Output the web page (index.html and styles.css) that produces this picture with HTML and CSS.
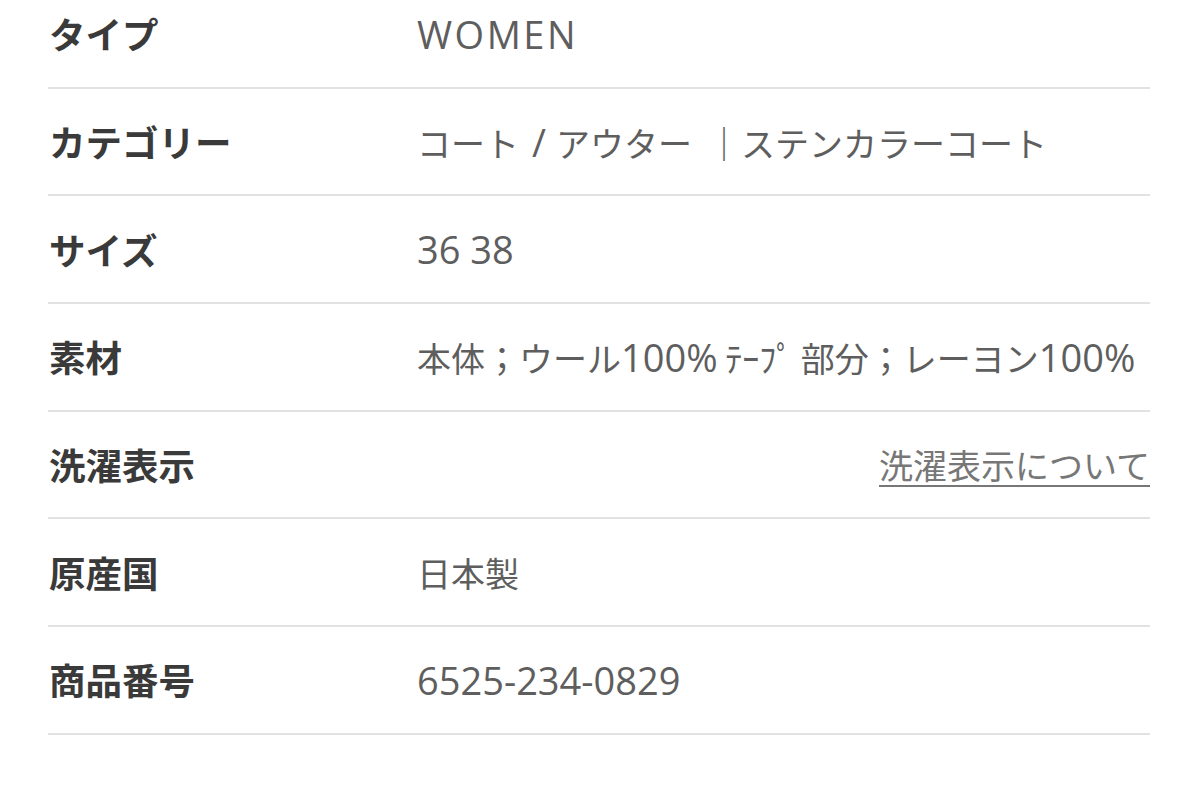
FILE: index.html
```html
<!DOCTYPE html>
<html lang="ja">
<head>
<meta charset="utf-8">
<title>商品詳細</title>
<link rel="stylesheet" href="styles.css">
</head>
<body>
<dl class="spec">
  <div class="row"><dt class="label">タイプ</dt><dd class="value"><span class="lat wide">WOMEN</span></dd></div>
  <div class="row"><dt class="label">カテゴリー</dt><dd class="value">コート<span class="lat slash">/</span>アウター<span class="bar">｜</span>ステンカラーコート</dd></div>
  <div class="row"><dt class="label">サイズ</dt><dd class="value"><span class="lat">36 38</span></dd></div>
  <div class="row"><dt class="label">素材</dt><dd class="value">本体；ウール<span class="lat">100%</span> ﾃｰﾌﾟ 部分；レーヨン<span class="lat">100%</span></dd></div>
  <div class="row"><dt class="label">洗濯表示</dt><dd class="value value-right"><a class="link" href="#">洗濯表示について</a></dd></div>
  <div class="row"><dt class="label">原産国</dt><dd class="value">日本製</dd></div>
  <div class="row"><dt class="label">商品番号</dt><dd class="value"><span class="lat">6525-234-0829</span></dd></div>
</dl>
</body>
</html>
```
FILE: styles.css
```css
html, body {
  margin: 0;
  padding: 0;
  background: #ffffff;
}
body {
  font-family: "Noto Sans CJK JP", "Open Sans", sans-serif;
  color: #333333;
  overflow: hidden;
}
.spec {
  margin: -19px 0 0 48px;
  width: 1102px;
  padding: 0;
}
.row {
  display: grid;
  grid-template-columns: 369px 1fr;
  align-items: center;
  height: 107.7px;
  box-sizing: border-box;
  border-bottom: 2px solid #e2e2e2;
}
.label {
  margin: 0;
  font-size: 36.5px;
  font-weight: 700;
  color: #3a3a3a;
  padding-left: 1px;
}
.value {
  margin: 0;
  font-size: 34px;
  font-weight: 400;
  color: #5e5e5e;
  white-space: nowrap;
}
.value-right {
  text-align: right;
}
.lat {
  font-family: "Open Sans", sans-serif;
  font-size: 38px;
}
.wide {
  letter-spacing: 2.5px;
}
.slash {
  margin: 0 10px 0 13px;
}
.bar {
  margin-left: 15px;
}
.link {
  color: #777777;
  text-decoration: underline;
  text-decoration-thickness: 2px;
  text-underline-offset: 6px;
}
```
